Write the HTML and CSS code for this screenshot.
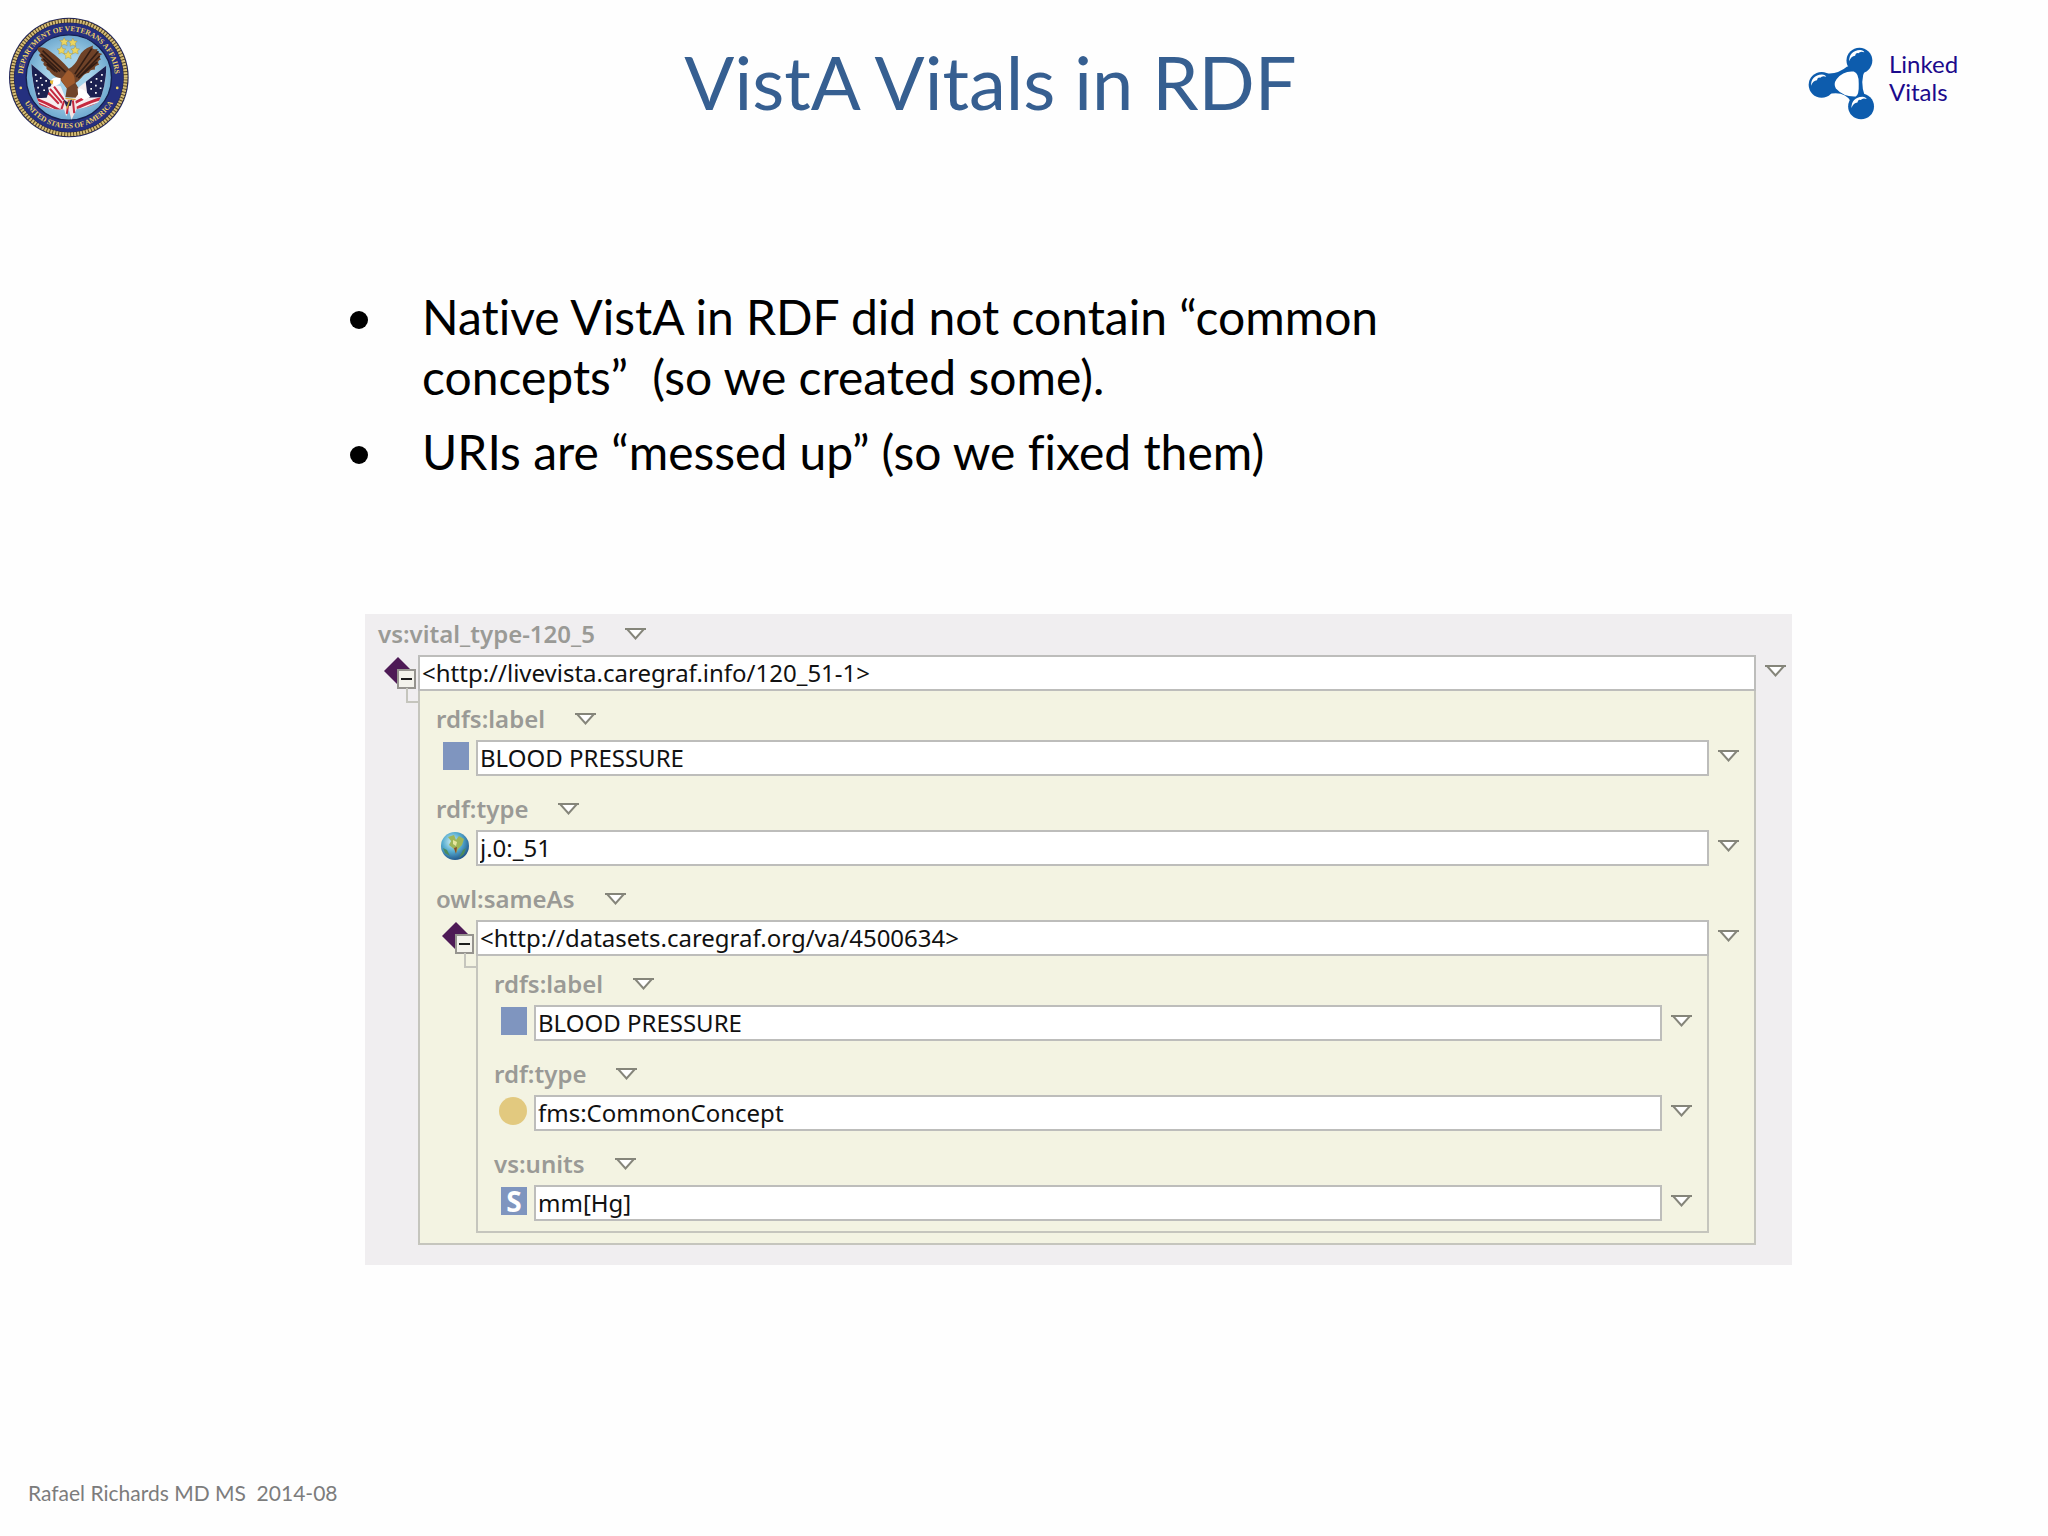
FILE: index.html
```html
<!DOCTYPE html>
<html lang="en">
<head>
    <meta charset="UTF-8">
    <meta name="viewport" content="width=device-width, initial-scale=1.0">
    <title>VistA Vitals in RDF</title>
    <link rel="stylesheet" href="styles.css">
</head>
<body>

    <header class="slide-header">
        <svg class="seal" viewBox="28 50 357 360" role="img" aria-label="Department of Veterans Affairs seal">
            <defs>
                <path id="arc-top" d="M69 229 A137 137 0 0 1 343 229" />
                <path id="arc-bottom" d="M54 229 A152 152 0 0 0 358 229" />
                <clipPath id="flag-left"><path d="M94 190 L178 262 Q196 300 212 322 Q170 334 118 310 Q98 262 94 190Z" /></clipPath>
                <clipPath id="flag-right"><path d="M318 194 L232 262 Q216 300 200 322 Q246 330 294 304 Q316 262 318 194Z" /></clipPath>
                <radialGradient id="sky"><stop offset="0.5" stop-color="#a6d3ea" /><stop offset="1" stop-color="#6fa9cf" /></radialGradient>
            </defs>
            <circle cx="206" cy="230" r="178" fill="#20245a" />
            <circle cx="206" cy="230" r="169" fill="none" stroke="#5b4a22" stroke-width="11" />
            <circle cx="206" cy="230" r="169" fill="none" stroke="#d6bd78" stroke-width="11" stroke-dasharray="6 3" />
            <circle cx="206" cy="230" r="162" fill="#25307f" />
            <circle cx="206" cy="230" r="127" fill="url(#sky)" stroke="#16204f" stroke-width="4" />
            <g class="seal-text">
                <text text-anchor="middle"><textPath href="#arc-top" startOffset="50%">DEPARTMENT OF VETERANS AFFAIRS</textPath></text>
                <text text-anchor="middle"><textPath href="#arc-bottom" startOffset="50%">UNITED STATES OF AMERICA</textPath></text>
            </g>
            <circle cx="63" cy="261" r="4" fill="#f0d268" />
            <circle cx="350" cy="261" r="4" fill="#f0d268" />
            <!-- stars -->
            <g fill="#ecd560" stroke="#8f7f35" stroke-width="1">
                <path id="star" d="M192 111 l4 8 9 1 -6 6 2 9 -9 -4 -8 4 1 -9 -6 -6 9 -1z" />
                <use href="#star" x="26" y="2" />
                <use href="#star" x="-8" y="25" />
                <use href="#star" x="33" y="25" />
                <use href="#star" x="12" y="39" />
            </g>
            <!-- flags -->
            <g clip-path="url(#flag-left)">
                <path d="M80 180 H220 V340 H80Z" fill="#f6eef0" />
                <path d="M104 292 Q150 310 190 334 M108 305 Q150 324 190 345 M136 272 Q175 292 214 318 M150 258 Q180 270 216 300" stroke="#c52a40" stroke-width="8" fill="none" />
                <path d="M90 184 L158 240 L140 290 L106 292Z" fill="#1b2050" />
                <path d="M105 222h5M120 232h5M136 240h5M108 240h5M124 252h5M112 260h5M130 268h5M114 278h5" stroke="#fff" stroke-width="5" />
            </g>
            <g clip-path="url(#flag-right)">
                <path d="M190 180 H330 V340 H190Z" fill="#f6eef0" />
                <path d="M310 290 Q260 304 212 330 M310 304 Q262 318 220 340 M268 284 Q230 300 205 316" stroke="#c52a40" stroke-width="8" fill="none" />
                <path d="M322 188 L256 240 L262 290 L310 288Z" fill="#1b2050" />
                <path d="M302 222h5M286 234h5M270 244h5M300 240h5M284 254h5M270 264h5M298 262h5M284 276h5" stroke="#fff" stroke-width="5" />
            </g>
            <!-- eagle -->
            <path d="M114 141 Q132 136 150 152 Q178 172 206 204 Q226 192 236 168 Q246 146 278 135 Q272 150 292 145 Q284 154 306 160 Q290 168 302 176 Q288 182 296 192 Q280 196 284 206 Q268 206 266 216 Q252 218 244 230 Q236 240 226 246 L240 272 L226 290 L196 288 L200 262 L178 234 Q156 224 148 210 Q136 206 140 198 Q126 194 132 184 Q118 180 126 172 Q112 164 122 158 Q110 150 114 141Z" fill="#6f4228" />
            <path d="M128 150 L196 214 M124 160 L180 212 M130 174 L172 214 M140 190 L166 212 M274 144 L224 220 M294 152 L228 228 M298 166 L234 232 M290 184 L240 226" stroke="#331d14" stroke-width="5" fill="none" />
            <path d="M204 208 Q226 218 224 246 L200 262 L182 236Z" fill="#a05b2d" />
            <path d="M154 236 Q164 226 182 232 L180 248 L164 256Z" fill="#fff" />
            <path d="M150 240 L160 238 L158 250 Q148 250 150 240Z" fill="#e8b83a" />
            <path d="M232 262 Q252 260 270 288 L252 298 L234 284Z" fill="#fff" />
            <!-- shield -->
            <path d="M144 260 Q160 250 182 256 L198 296 L184 314 Q150 298 144 260Z" fill="#f7f2f3" />
            <path d="M150 264 L188 308 M162 257 L194 300 M146 276 L176 308" stroke="#c52a40" stroke-width="6" />
            <path d="M176 320 L194 292 L224 292 L230 322 L214 356 L206 326 L198 346 L192 324Z" fill="#f3e4e4" />
            <path d="M192 300 L184 324 M206 298 L200 338 M218 298 L222 336" stroke="#c52a40" stroke-width="6" />
            <path d="M190 294 L202 304 L216 294 L212 314 L198 316Z" fill="#24294f" />
            <path d="M208 300 L200 322 M196 292 L226 296" stroke="#d4a838" stroke-width="4" />
        </svg>

        <h1>VistA Vitals in RDF</h1>

        <div class="brand">
            <svg class="brand-icon" viewBox="60 50 202 218" aria-hidden="true">
                <path d="M115 128 Q150 132 178 108 L235 112 Q214 150 232 200 L190 214 Q170 178 116 192Z" fill="#0d5cad" />
                <g fill="#0d5cad">
                    <circle cx="215" cy="90" r="39" />
                    <circle cx="101" cy="163" r="39" />
                    <circle cx="220" cy="228" r="39" />
                </g>
                <path d="M146 146 Q166 120 198 123 Q214 128 213 160 Q214 194 204 198 Q168 200 144 174 Q136 160 146 146Z" fill="#fff" />
                <g id="shine" fill="#fff">
                    <path d="M184 92 Q184 60 217 58 Q228 59 230 65 Q218 60 212 68 Q204 64 202 75 Q190 76 184 92Z" />
                </g>
                <use href="#shine" x="-115" y="74" />
                <use href="#shine" x="7" y="141" />
            </svg>
            <p>Linked<br>Vitals</p>
        </div>
    </header>

    <main>
        <ul class="points">
            <li>Native VistA in RDF did not contain “common<br>concepts”&nbsp; (so we created some).</li>
            <li>URIs are “messed up” (so we fixed them)</li>
        </ul>

        <svg class="symbols" aria-hidden="true">
            <symbol id="arrow" viewBox="0 0 21 12">
                <path d="M2 1 H19 L10.500 10.500Z" fill="#fff" stroke="#85857a" stroke-width="2" />
                <path d="M0 1 H21" stroke="#85857a" stroke-width="2" />
            </symbol>
            <symbol id="resource" viewBox="0 0 34 34">
                <path d="M14 0 L28 14 L14 28 L0 14Z" fill="#4e1a56" />
                <path d="M14 13 H31 V31 H14Z" fill="#f4f3ec" stroke="#96948f" stroke-width="2" />
                <path d="M17 22 H28" stroke="#1c1c1c" stroke-width="2" />
            </symbol>
        </svg>

        <form class="panel">
            <div class="field">
                <div class="field-label"><label for="vital-type">vs:vital_type-120_5</label><button type="button" class="arrow" aria-label="Property menu"><svg><use href="#arrow" /></svg></button></div>
                <div class="field-row">
                    <svg class="icon-resource"><use href="#resource" /></svg>
                    <input type="text" id="vital-type" value="&lt;http://livevista.caregraf.info/120_51-1&gt;">
                    <button type="button" class="arrow" aria-label="Value menu"><svg><use href="#arrow" /></svg></button>
                </div>

                <div class="nested">
                    <div class="field">
                        <div class="field-label"><label for="label-1">rdfs:label</label><button type="button" class="arrow" aria-label="Property menu"><svg><use href="#arrow" /></svg></button></div>
                        <div class="field-row">
                            <span class="icon-literal"></span>
                            <input type="text" id="label-1" value="BLOOD PRESSURE">
                            <button type="button" class="arrow" aria-label="Value menu"><svg><use href="#arrow" /></svg></button>
                        </div>
                    </div>
                    <div class="field">
                        <div class="field-label"><label for="type-1">rdf:type</label><button type="button" class="arrow" aria-label="Property menu"><svg><use href="#arrow" /></svg></button></div>
                        <div class="field-row">
                            <svg class="icon-round" viewBox="0 0 28 28" aria-hidden="true">
                                <defs>
                                    <radialGradient id="ocean" cx="0.4" cy="0.35" r="0.7"><stop offset="0" stop-color="#d2f0f4" /><stop offset="0.5" stop-color="#55acd0" /><stop offset="1" stop-color="#1c4f86" /></radialGradient>
                                </defs>
                                <circle cx="14" cy="14" r="14" fill="url(#ocean)" />
                                <path d="M7 5 L13 3 L15 8 L18 4 L23 7 L21 13 L17 17 L15 21 L13 17 L8 13 L10 9Z" fill="#9fb657" />
                                <path d="M12 8 L16 10 L15 14 L12 12Z" fill="#e8e6a0" />
                                <path d="M2 16 L6 18 L9 24 L4 21Z M22 18 L25 16 L23 22 L18 26Z" fill="#4d8b5b" />
                                <path d="M13 16 L16 15 L15 22Z" fill="#8a4a2c" />
                            </svg>
                            <input type="text" id="type-1" value="j.0:_51">
                            <button type="button" class="arrow" aria-label="Value menu"><svg><use href="#arrow" /></svg></button>
                        </div>
                    </div>
                    <div class="field">
                        <div class="field-label"><label for="same-as">owl:sameAs</label><button type="button" class="arrow" aria-label="Property menu"><svg><use href="#arrow" /></svg></button></div>
                        <div class="field-row">
                            <svg class="icon-resource"><use href="#resource" /></svg>
                            <input type="text" id="same-as" value="&lt;http://datasets.caregraf.org/va/4500634&gt;">
                            <button type="button" class="arrow" aria-label="Value menu"><svg><use href="#arrow" /></svg></button>
                        </div>

                        <div class="nested">
                            <div class="field">
                                <div class="field-label"><label for="label-2">rdfs:label</label><button type="button" class="arrow" aria-label="Property menu"><svg><use href="#arrow" /></svg></button></div>
                                <div class="field-row">
                                    <span class="icon-literal"></span>
                                    <input type="text" id="label-2" value="BLOOD PRESSURE">
                                    <button type="button" class="arrow" aria-label="Value menu"><svg><use href="#arrow" /></svg></button>
                                </div>
                            </div>
                            <div class="field">
                                <div class="field-label"><label for="type-2">rdf:type</label><button type="button" class="arrow" aria-label="Property menu"><svg><use href="#arrow" /></svg></button></div>
                                <div class="field-row">
                                    <span class="icon-round icon-class"></span>
                                    <input type="text" id="type-2" value="fms:CommonConcept">
                                    <button type="button" class="arrow" aria-label="Value menu"><svg><use href="#arrow" /></svg></button>
                                </div>
                            </div>
                            <div class="field">
                                <div class="field-label"><label for="units">vs:units</label><button type="button" class="arrow" aria-label="Property menu"><svg><use href="#arrow" /></svg></button></div>
                                <div class="field-row">
                                    <span class="icon-literal">S</span>
                                    <input type="text" id="units" value="mm[Hg]">
                                    <button type="button" class="arrow" aria-label="Value menu"><svg><use href="#arrow" /></svg></button>
                                </div>
                            </div>
                        </div>
                    </div>
                </div>
            </div>
        </form>
    </main>

    <footer>Rafael Richards MD MS&nbsp; 2014-08</footer>

</body>
</html>
```
FILE: styles.css
```css
* {
    box-sizing: border-box;
}
body {
    font-family: "Gill Sans", Lato, sans-serif;
    font-variant-ligatures: none;
    background-color: #fefefe;
    margin: 0;
    min-height: 100vh;
    display: flex;
    flex-direction: column;
    color: #000;
}
.slide-header {
    display: grid;
    grid-template-columns: 240px 1fr 240px;
    align-items: center;
    padding: 17px 0 0 9px;
}
.seal {
    width: 120px;
    height: 121px;
}
.seal-text {
    font-family: "Liberation Serif", serif;
    font-size: 22px;
    font-weight: bold;
    fill: #f0d268;
}
h1 {
    margin: 8px 76px 0 0;
    text-align: center;
    font-size: 74px;
    line-height: 90px;
    font-weight: normal;
    color: #365f91;
}
.brand {
    display: flex;
    align-items: center;
    gap: 14px;
    color: #1b0a8c;
}
.brand-icon {
    width: 67px;
    height: 73px;
    margin-top: 12px;
}
.brand p {
    margin: 0;
    font-size: 24px;
    line-height: 28px;
}
main {
    flex: 1;
}
.points {
    list-style: none;
    margin: 149px 0 0 350px;
    padding: 0;
    font-size: 48px;
    line-height: 60px;
}
.points li {
    display: flex;
    margin-bottom: 15px;
}
.points li::before {
    content: "";
    flex: none;
    width: 18px;
    height: 18px;
    margin: 24px 54px 0 0;
    border-radius: 50%;
    background-color: #000;
}
.symbols {
    display: none;
}
.panel {
    margin: 132px 256px 0 365px;
    padding: 0 6px 20px 13px;
    background-color: #f0eef0;
    font-family: "Segoe UI", "Noto Sans", sans-serif;
}
.field + .field {
    margin-top: 13px;
}
.field-label {
    display: flex;
    align-items: center;
    gap: 30px;
    height: 41px;
    padding-bottom: 2px;
    font-size: 24px;
    font-weight: 600;
    color: #9a9a96;
}
.field-row {
    display: grid;
    grid-template-columns: 40px 1fr 30px;
    align-items: start;
}
input {
    width: 100%;
    height: 36px;
    padding: 0 2px 2px;
    border: 2px solid #bdbdbb;
    background-color: #fff;
    font-family: inherit;
    font-size: 24px;
    color: #111;
}
.arrow {
    display: flex;
    padding: 0;
    border: none;
    background: none;
    cursor: pointer;
}
.arrow svg {
    width: 21px;
    height: 12px;
}
.field-row .arrow {
    margin: 10px 0 0 9px;
}
.icon-resource {
    width: 34px;
    height: 34px;
    margin: 2px 0 0 6px;
}
.icon-literal {
    width: 26px;
    height: 28px;
    margin: 2px 0 0 7px;
    background-color: #7f95bf;
    color: #fff;
    font-size: 28px;
    line-height: 28px;
    font-weight: bold;
    text-align: center;
}
.icon-round {
    width: 28px;
    height: 28px;
    margin: 2px 0 0 5px;
}
.icon-class {
    border-radius: 50%;
    background-color: #e2c97f;
}
.nested {
    position: relative;
    margin: 0 30px 0 40px;
    padding: 8px 15px 10px 16px;
    border: 2px solid #c5c5bd;
    border-top: none;
    background-color: #f3f3e2;
}
.nested::before {
    content: "";
    position: absolute;
    left: -14px;
    top: -3px;
    width: 12px;
    height: 13px;
    border-left: 2px solid #c5c5bd;
    border-bottom: 2px solid #c5c5bd;
}
footer {
    padding: 0 28px 28px;
    font-size: 21px;
    line-height: 30px;
    color: #7c7c7c;
}
```
